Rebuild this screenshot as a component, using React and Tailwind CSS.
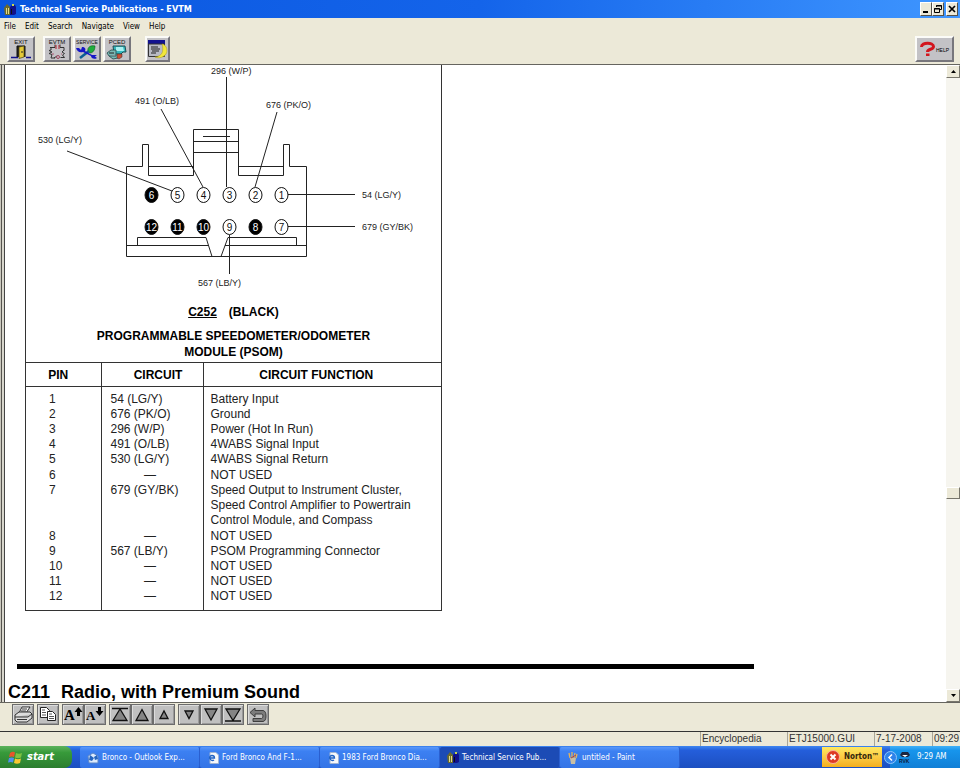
import React from "react";

const UI = "font-['DejaVu_Sans_Condensed','DejaVu_Sans',sans-serif]";
const ARIAL = "font-['Liberation_Sans',Arial,sans-serif]";

const PINS = [
  [6, 151, 195, true], [5, 177, 195, false], [4, 203, 195, false],
  [3, 229, 195, false], [2, 255, 195, false], [1, 281, 195, false],
  [12, 151, 227, true], [11, 177, 227, true], [10, 203, 227, true],
  [9, 229, 227, false], [8, 255, 227, true], [7, 281, 227, false],
];

const WIRES = [
  ["296 (W/P)", 211, 74], ["491 (O/LB)", 135, 104], ["676 (PK/O)", 266, 108],
  ["530 (LG/Y)", 38, 143], ["54 (LG/Y)", 362, 198], ["679 (GY/BK)", 362, 230],
  ["567 (LB/Y)", 198, 286],
];

const ROWS = [
  ["1", "54 (LG/Y)", ["Battery Input"]],
  ["2", "676 (PK/O)", ["Ground"]],
  ["3", "296 (W/P)", ["Power (Hot In Run)"]],
  ["4", "491 (O/LB)", ["4WABS Signal Input"]],
  ["5", "530 (LG/Y)", ["4WABS Signal Return"]],
  ["6", "", ["NOT USED"]],
  ["7", "679 (GY/BK)", ["Speed Output to Instrument Cluster,", "Speed Control Amplifier to Powertrain", "Control Module, and Compass"]],
  ["8", "", ["NOT USED"]],
  ["9", "567 (LB/Y)", ["PSOM Programming Connector"]],
  ["10", "", ["NOT USED"]],
  ["11", "", ["NOT USED"]],
  ["12", "", ["NOT USED"]],
];

function AppIcon() {
  return (
    <svg width="12" height="13" viewBox="0 0 12 13" aria-hidden="true">
      <path d="M0 5l3-4 3 3v8H1z" fill="#6b6a2c" />
      <path d="M2 5h1v6H2zM4 5h1v6H4z" fill="#e4dc8a" />
      <path d="M6 4l2-2h3l1 2v7l-2 1H6z" fill="#10128c" />
      <path d="M8 1h2v2H8z" fill="#c9d94a" />
      <path d="M7 6h1v5H7z" fill="#111" />
    </svg>
  );
}

function TitleBar() {
  const b = "flex h-[14px] w-[12px] items-center justify-center border border-t-white border-l-white border-r-[#55534a] border-b-[#55534a] bg-[#ece9d8]";
  return (
    <header className="flex h-[18px] shrink-0 items-center bg-linear-to-r from-[#0a57e0] via-[#1464ea] to-[#3f96ff] pr-[2px] pl-1">
      <AppIcon />
      <h1 className={`ml-1 flex-1 pt-[2px] text-[9px] font-bold text-white ${UI}`}>Technical Service Publications - EVTM</h1>
      <button aria-label="Minimize" className={b}>
        <svg width="10" height="10"><path d="M2 7h5v2H2z" /></svg>
      </button>
      <button aria-label="Restore" className={b}>
        <svg width="10" height="10" fill="none" stroke="#000"><path d="M3.500 3V1.500h5v4H7M3 2h6M1.500 4.500h5v4h-5zM1 5h6" /></svg>
      </button>
      <button aria-label="Close" className={`ml-[2px] ${b}`}>
        <svg width="10" height="10" stroke="#000" strokeWidth="1.700"><path d="M2 2l6 6M8 2l-6 6" /></svg>
      </button>
    </header>
  );
}

function MenuBar() {
  return (
    <nav className={`flex h-4 shrink-0 items-center gap-[9px] pt-[2px] pl-1 text-[8px] text-black ${UI}`}>
      {["File", "Edit", "Search", "Navigate", "View", "Help"].map((m) => (
        <button key={m}>{m}</button>
      ))}
    </nav>
  );
}

function ToolButton({ label, children, className = "w-[28px]" }) {
  return (
    <button aria-label={label} className={`flex h-[26px] items-center justify-center border-2 border-t-[#fbfbf8] border-l-[#fbfbf8] border-r-[#77767c] border-b-[#77767c] bg-[#c3c2c6] ${className}`}>
      {children}
    </button>
  );
}

function Caption({ children, size = "6" }) {
  return (
    <text x="12" y="6" fontSize={size} textAnchor="middle" fontFamily="Liberation Sans, sans-serif" fill="#111">{children}</text>
  );
}

function Toolbar() {
  return (
    <div className="flex h-[30px] shrink-0 items-center pr-[6px] pl-[7px]">
      <ToolButton label="Exit">
        <svg width="24" height="22" viewBox="0 0 24 22">
          <Caption size="6">EXIT</Caption>
          <path d="M2 19.500h7M17 19.500h5" stroke="#10108c" strokeWidth="1.500" />
          <path d="M8 19V8h8v11" fill="#222" stroke="#111" />
          <path d="M10 9l5-1v11l-5 1.500z" fill="#e3c838" stroke="#4c4310" strokeWidth=".7" />
          <path d="M13 13v2" stroke="#222" />
        </svg>
      </ToolButton>
      <div className="ml-2 flex gap-[2px]">
        <ToolButton label="EVTM">
          <svg width="24" height="22" viewBox="0 0 24 22" fill="none">
            <Caption size="6">EVTM</Caption>
            <path d="M5 9.500h5v-3M15 6.500v3h4v3M6 10v2l-2 .5 3 1.500-3 1.500 3 1-1 3.500h4" stroke="#333" />
            <path d="M19 12l-2 2 2.500 1.500-2 1.500 2 2.500h-4M9 20l3-2" stroke="#333" />
            <path d="M11 7v4M14 7v4" stroke="#b3202c" />
            <circle cx="13" cy="19" r="1.500" stroke="#a04860" />
            <path d="M7 16h2M16 16h1" stroke="#b35a78" />
          </svg>
        </ToolButton>
        <ToolButton label="Service">
          <svg width="24" height="22" viewBox="0 0 24 22">
            <Caption size="5">SERVICE</Caption>
            <path d="M13 13c-1-4 3-6 7-5 0 4-2 7-5 7z" fill="#1fae3c" stroke="#0a5a1d" strokeWidth=".6" />
            <path d="M14 13L5 20" stroke="#0b5f94" strokeWidth="2.500" />
            <path d="M1 10h3l2 2 1-3c3 0 4 2 3 4l7 4h5l-2 1.500 2 1.500c-3 2-6 0-6-2l-8-4c-4 1-6-1-7-4z" fill="#1616c8" />
          </svg>
        </ToolButton>
        <ToolButton label="PCED">
          <svg width="24" height="22" viewBox="0 0 24 22">
            <Caption size="6">PCED</Caption>
            <path d="M8 8h12l1 6h-3l-2 2H9z" fill="#35b8bd" stroke="#1c4c52" />
            <path d="M11 9h7l1 4h-8z" fill="#a9f1f2" />
            <path d="M2 15l4-3h5v6H4zM4 18l4 3 5-1v-4" fill="#79b9b5" stroke="#2b5354" strokeWidth=".9" />
            <path d="M12 16h5v3l-3 2-2-1z" fill="#c94e34" stroke="#333" strokeWidth=".5" />
            <path d="M4 15h5" stroke="#222" />
          </svg>
        </ToolButton>
      </div>
      <ToolButton label="Window list" className="ml-[14px] w-[25px]">
        <svg width="21" height="22" viewBox="0 0 21 22">
          <path d="M1 2h17v4H1z" fill="#12128f" />
          <path d="M1.500 6h16v12.500h-16z" fill="#b8bac4" stroke="#333" />
          <path d="M4 9h7M4 11h9M5 13h7M4 15h5" stroke="#222" />
          <path d="M15 6c5 1 6 7 4 10s-7 5-11 3c3 0 6-2 7-4s1-6 0-9z" fill="#f1e63a" stroke="#a99b18" strokeWidth=".5" />
        </svg>
      </ToolButton>
      <div className="flex-1" />
      <ToolButton label="Help" className="w-[39px]">
        <svg width="35" height="22" viewBox="0 0 35 22">
          <path d="M4.500 9c0-5 12-5 12-.5 0 3.500-6 2-6 5.500" fill="none" stroke="#d3161e" strokeWidth="3" />
          <path d="M9 15.500h3.500v2.500H9z" fill="#d3161e" />
          <text x="19" y="13.500" fontSize="5" fontFamily="Liberation Sans, sans-serif">HELP</text>
        </svg>
      </ToolButton>
    </div>
  );
}

function Connector() {
  return (
    <svg className="block" width="415" height="236" viewBox="26 65 415 236" fontFamily="Liberation Sans, Arial, sans-serif" role="img" aria-label="C252 connector pinout">
      <g fill="none" stroke="#222" strokeWidth="1">
        <path d="M126.500 256.500V166.500H142.500V144.500H148.500V175.500H193.500V129.500H238.500V175.500H283.500V144.500H289.500V166.500H306.500V256.500Z" />
        <path d="M148.500 166.500H193.500M238.500 166.500H283.500M193.500 141.500H238.500M193.500 152.500H238.500M203 136.500H230" />
        <path d="M126.500 245.500H208.500M225 245.500H306.500M137.500 245.500V237.500H206L212 256.500M221 256.500L228 237.500H296.500V245.500" />
        <path d="M226.500 77V187M161 109L203 187M277 112L255 187M67 151L172 191M288 194.500H355M288 226.500H355M229.500 235V274" />
      </g>
      {PINS.map(([n, x, y, filled]) => (
        <g key={n}>
          <ellipse cx={x + 0.5} cy={y} rx="6.500" ry="7.500" fill={filled ? "#000" : "#fff"} stroke="#111" />
          <text x={x + 0.5} y={y + 3.5} fontSize="10" textAnchor="middle" fill={filled ? "#fff" : "#111"}>{n}</text>
        </g>
      ))}
      {WIRES.map(([t, x, y]) => (
        <text key={t} x={x} y={y} fontSize="9" fill="#222">{t}</text>
      ))}
    </svg>
  );
}

function PinTable() {
  return (
    <table className="w-full table-fixed border-collapse text-[12px] leading-[15px] text-[#222]">
      <colgroup>
        <col className="w-[75px]" />
        <col className="w-[102px]" />
        <col />
      </colgroup>
      <thead>
        <tr className="h-6 border-y border-[#333] text-black">
          <th className="border-r border-[#333] pt-px pr-[10px]">PIN</th>
          <th className="border-r border-[#333] pt-px pl-3">CIRCUIT</th>
          <th className="pt-px pr-3">CIRCUIT FUNCTION</th>
        </tr>
      </thead>
      <tbody className="align-top">
        {ROWS.map(([pin, circuit, fn], i) => {
          const pad = i === 0 ? "pt-[5px]" : i === 4 || i === 6 ? "pb-px" : i === 11 ? "pb-[6px]" : "";
          return (
            <tr key={pin}>
              <td className={`border-r border-[#333] pl-[23px] ${pad}`}>{pin}</td>
              <td className={`border-r border-[#333] ${circuit ? "pl-[9px]" : "pr-1 text-center"} ${pad}`}>{circuit || "—"}</td>
              <td className={`pl-[7px] whitespace-nowrap ${pad}`}>
                {fn.map((line) => <div key={line}>{line}</div>)}
              </td>
            </tr>
          );
        })}
      </tbody>
    </table>
  );
}

function ScrollButton({ label, d }) {
  return (
    <button aria-label={label} className="flex h-[13px] shrink-0 items-center justify-center border border-t-white border-l-white border-r-[#77756b] border-b-[#77756b] bg-[#ece9d8]">
      <svg width="5" height="3"><path d={d} /></svg>
    </button>
  );
}

function Viewer() {
  return (
    <main className="flex min-h-0 flex-1 border-y border-[#66655f] bg-white">
      <div className="flex w-[5px] shrink-0 border-r border-[#444]">
        <div className="w-px bg-[#c9c7bd]" />
        <div className="w-px bg-[#55534e]" />
        <div className="flex-1 bg-[#d8d6cc]" />
      </div>
      <div className={`min-w-0 flex-1 overflow-hidden ${ARIAL}`}>
        <section className="ml-5 w-[417px] border-x border-b border-[#333]">
          <Connector />
          <h2 className="pt-[3px] text-center text-[12px] leading-4 font-bold">
            <span className="mr-3 underline">C252</span>(BLACK)
          </h2>
          <p className="pt-2 pb-[2px] text-center text-[12px] leading-4 font-bold">
            PROGRAMMABLE SPEEDOMETER/ODOMETER<br />MODULE (PSOM)
          </p>
          <PinTable />
        </section>
        <hr className="mt-[53px] mr-[192px] ml-3 h-[5px] border-0 bg-black" />
        <h2 className="mt-3 ml-[3px] text-[18px] leading-[22px] font-bold">
          <span className="mr-[11px]">C211</span>Radio, with Premium Sound
        </h2>
      </div>
      <div className="flex w-[14px] shrink-0 flex-col bg-[#f6f5ef]">
        <ScrollButton label="Scroll up" d="M0 3L2.500 0 5 3z" />
        <div className="flex-[410]" />
        <div className="h-3 border border-t-white border-l-white border-r-[#77756b] border-b-[#77756b] bg-[#ece9d8]" />
        <div className="flex-[191]" />
        <ScrollButton label="Scroll down" d="M0 0h5L2.500 3z" />
      </div>
    </main>
  );
}

const TRI = { fill: "#858585", stroke: "#111", strokeWidth: 1.3 };

function SmallTool({ label, children }) {
  return (
    <button aria-label={label} className="flex h-[21px] w-[22px] items-center justify-center border border-[#6c6c6c] bg-[#c0c0c0] shadow-[inset_1px_1px_0_#dcdcdc,inset_-1px_-1px_0_#9a9a9a]">
      <svg width="20" height="19" viewBox="0 0 20 19">{children}</svg>
    </button>
  );
}

function FontGlyph({ y, size, d }) {
  return (
    <>
      <text x="1" y={y} fontSize={size} fontFamily="Liberation Serif, serif" fontWeight="bold">A</text>
      <path d={d} />
    </>
  );
}

function BottomBar() {
  return (
    <div className="flex h-7 shrink-0 gap-[3px] pt-px pl-3">
      <SmallTool label="Print">
        <path d="M6 8l3-6h8l-4 6z" fill="#fff" stroke="#333" />
        <path d="M2 10l4-3h11l2 2-4 3H2zM2 12v3l2 2h10l5-4V9" fill="#ddd" stroke="#333" />
        <path d="M4 14.500h10M9 4h5M8 6h5" stroke="#333" />
      </SmallTool>
      <SmallTool label="Copy">
        <path d="M2.500 2.500h6l3 3v7h-9z" fill="#fff" stroke="#222" />
        <path d="M9.500 6.500h5l3 3v6h-8z" fill="#fff" stroke="#222" />
        <path d="M4 5h3M4 7.500h4M4 10h4M11 9h3M11 11.500h5M11 13.500h5" stroke="#555" />
      </SmallTool>
      <div className="flex">
        <SmallTool label="Larger text"><FontGlyph y={15} size={15} d="M14 11V7h-2.500L15.500 2l4 5H17v4z" /></SmallTool>
        <SmallTool label="Smaller text"><FontGlyph y={15} size={13} d="M13 2v4h-2.500l4 5 4-5H16V2z" /></SmallTool>
      </div>
      <div className="flex">
        <SmallTool label="First page"><path d="M2 3.500h16M3 15.500L10 4l7 11.500z" {...TRI} /></SmallTool>
        <SmallTool label="Page up"><path d="M4 15.500L10 4.500l6 11z" {...TRI} /></SmallTool>
        <SmallTool label="Line up"><path d="M6 13.500L10 6l4 7.500z" {...TRI} /></SmallTool>
      </div>
      <div className="flex">
        <SmallTool label="Line down"><path d="M6 6h8l-4 7.500z" {...TRI} /></SmallTool>
        <SmallTool label="Page down"><path d="M4 4h12l-6 11z" {...TRI} /></SmallTool>
        <SmallTool label="Last page"><path d="M2 16h16M3 4h14l-7 11.500z" {...TRI} /></SmallTool>
      </div>
      <SmallTool label="Back">
        <path d="M2 7.500L7 3v2.500H15q3 .5 3 5.500t-3 5.500H5v-3h8.500q1.500-.5 1.500-2.500t-1.500-2H7V12z" fill="#7c7c7c" stroke="#333" strokeWidth=".9" />
      </SmallTool>
    </div>
  );
}

function StatusBar() {
  const cell = "border-l border-[#a9a698] pl-px";
  return (
    <div className={`flex h-[15px] shrink-0 justify-end border-t border-[#333] text-[10px] leading-[14px] text-[#333] ${ARIAL}`}>
      <span className={`w-[87px] ${cell}`}>Encyclopedia</span>
      <span className={`w-[87px] ${cell}`}>ETJ15000.GUI</span>
      <span className={`w-[58px] ${cell}`}>7-17-2008</span>
      <span className={`w-[28px] ${cell}`}>09:29</span>
    </div>
  );
}

function MailIcon() {
  return (
    <svg width="12" height="12"><path d="M1 4l5-3 5 3v7H2z" fill="#dceafc" stroke="#5b86c8" /><path d="M3 3l4 3-2 3-3-1zM7 5l3-2 1 4-3 1z" fill="#2464c0" /></svg>
  );
}
function PageIcon() {
  return (
    <svg width="12" height="12"><path d="M3 .5h6l2.500 2.500v8.500H3z" fill="#f5f7fb" stroke="#9fb3d3" /><path d="M7 6H2.500a2.500 2.500 0 1 1 5 0H3a2.500 2.500 0 0 0 4 2" fill="none" stroke="#1f62c4" strokeWidth="1.300" /></svg>
  );
}
function PaintIcon() {
  return (
    <svg width="12" height="12"><path d="M3 6h6l-1 6H4z" fill="#c9bfa4" /><path d="M3 6L2 1M5 6V0M7 6l1-5M9 6l1-4" stroke="#e7b35a" strokeWidth="1.300" /><path d="M4 6l5-3" stroke="#b3413a" /></svg>
  );
}

const TASKS = [
  ["Bronco - Outlook Exp...", MailIcon, false],
  ["Ford Bronco And F-1...", PageIcon, false],
  ["1983 Ford Bronco Dia...", PageIcon, false],
  ["Technical Service Pub...", AppIcon, true],
  ["untitled - Paint", PaintIcon, false],
];

function Taskbar() {
  return (
    <footer className={`flex h-[22px] shrink-0 bg-linear-to-b from-[#3f86f0] via-[#245edb] via-20% to-[#1c4fc0] text-[8px] text-white ${UI}`}>
      <button className="flex w-[72px] items-center gap-1 rounded-r-lg bg-linear-to-b from-[#5cb35c] via-[#379a3a] via-30% to-[#2b7d2e] pl-2">
        <svg width="15" height="13" viewBox="0 0 15 13">
          <path d="M2 2q3-2 5-.5L6 6Q4 5 1 6z" fill="#e8552c" />
          <path d="M8 2q3 1.500 6 0L13 6.500q-3 1.500-6 0z" fill="#7fc242" />
          <path d="M1 7q3-1 5 0l-1 4.500Q3 10.500 0 11.500z" fill="#4f8ff0" />
          <path d="M7 7.500q3 1.500 6 0L12 12q-3 1.500-6 0z" fill="#f8c832" />
        </svg>
        <span className="text-[11px] font-bold italic">start</span>
      </button>
      <div className="ml-2 flex min-w-0 flex-1">
        {TASKS.map(([t, Icon, active]) => (
          <button
            key={t}
            className={`mt-px flex w-[120px] min-w-0 items-center gap-[3px] rounded-[2px] border-r border-[#2a5fd0] pl-[7px] whitespace-nowrap ${active ? "bg-[#1c4bb5]" : "bg-linear-to-b from-[#5a98fa] via-[#3c80f2] via-20% to-[#3474e6]"}`}
          >
            <Icon />
            <span>{t}</span>
          </button>
        ))}
      </div>
      <button className="my-px mr-[8px] flex w-[60px] shrink-0 items-center gap-1 bg-linear-to-b from-[#ffe860] to-[#f4ae1c] pl-1 font-bold text-[#33270c]">
        <svg width="14" height="14"><circle cx="7" cy="7" r="6.500" fill="#dd3a25" stroke="#f7b09a" /><path d="M4.500 4.500l5 5M9.500 4.500l-5 5" stroke="#fff" strokeWidth="2" /></svg>
        <span>Norton™</span>
      </button>
      <div className="flex w-[70px] shrink-0 items-center bg-linear-to-b from-[#3fb0f8] via-[#1795ec] via-20% to-[#117fd6]">
        <button aria-label="Show hidden icons" className="-ml-[6px]">
          <svg width="13" height="13"><circle cx="6.500" cy="6.500" r="6" fill="#2f83ea" stroke="#8cc5fb" /><path d="M8 3.500l-3 3 3 3" fill="none" stroke="#fff" strokeWidth="1.500" /></svg>
        </button>
        <svg className="ml-[2px]" width="12" height="12">
          <path d="M1 4l2-3h6l2 3-2 2H3z" fill="#1c2540" /><path d="M3 4h6L6 6z" fill="#fff" />
          <text x="0" y="12" fontSize="5" fontWeight="bold" fill="#0d1c3c" fontFamily="Liberation Sans, sans-serif">RVK</text>
        </svg>
        <span className="ml-[6px] whitespace-nowrap">9:29 AM</span>
      </div>
    </footer>
  );
}

export default function App() {
  return (
    <div className="flex h-screen flex-col overflow-hidden bg-[#ece9d8]">
      <TitleBar />
      <MenuBar />
      <Toolbar />
      <Viewer />
      <BottomBar />
      <StatusBar />
      <Taskbar />
    </div>
  );
}
